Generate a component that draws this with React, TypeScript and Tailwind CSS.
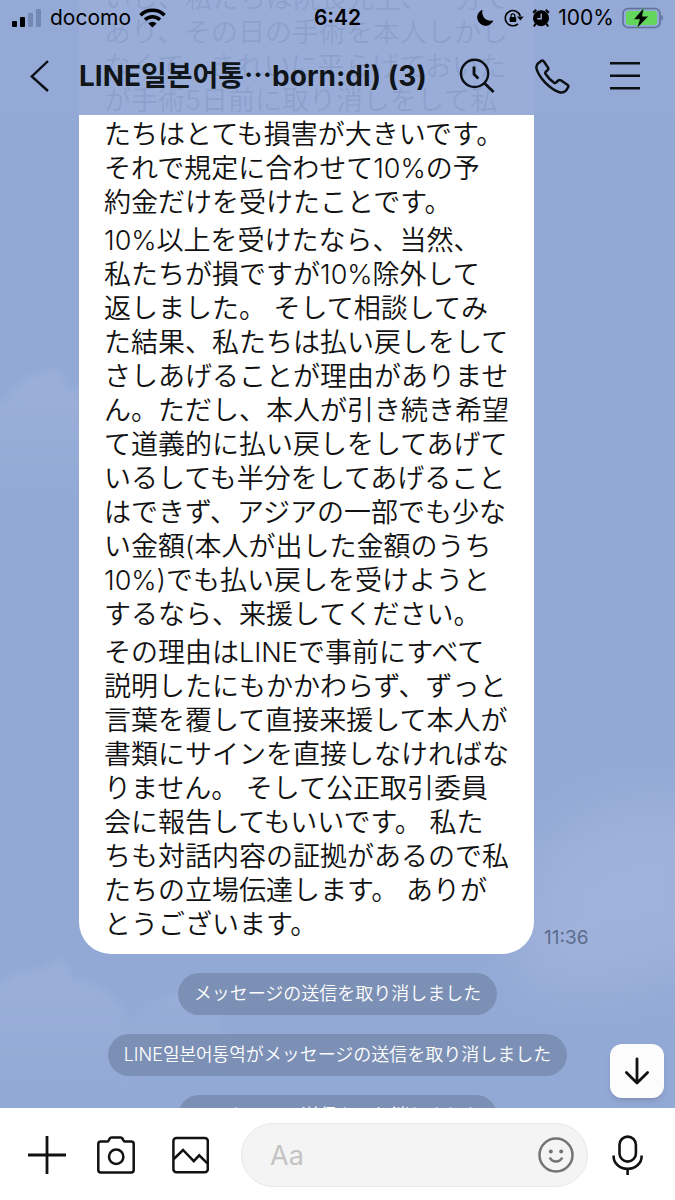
import type { ReactNode } from 'react';

const paragraphs = [
    [
        'いし、私たちは院長先生、一分で',
        'あり、その日の手術を本人しかし',
        'なくて、きれいに平らげておいた',
        'が手術5日前に取り消しをして私',
        'たちはとても損害が大きいです。',
        'それで規定に合わせて10%の予',
        '約金だけを受けたことです。',
    ],
    [
        '10%以上を受けたなら、当然、',
        '私たちが損ですが10%除外して',
        '返しました。 そして相談してみ',
        'た結果、私たちは払い戻しをして',
        'さしあげることが理由がありませ',
        'ん。ただし、本人が引き続き希望',
        'て道義的に払い戻しをしてあげて',
        'いるしても半分をしてあげること',
        'はできず、アジアの一部でも少な',
        'い金額(本人が出した金額のうち',
        '10%)でも払い戻しを受けようと',
        'するなら、来援してください。',
    ],
    [
        'その理由はLINEで事前にすべて',
        '説明したにもかかわらず、ずっと',
        '言葉を覆して直接来援して本人が',
        '書類にサインを直接しなければな',
        'りません。 そして公正取引委員',
        '会に報告してもいいです。 私た',
        'ちも対話内容の証拠があるので私',
        'たちの立場伝達します。 ありが',
        'とうございます。',
    ],
];

const notices = [
    'メッセージの送信を取り消しました',
    'LINE일본어통역がメッセージの送信を取り消しました',
    'メッセージの送信を取り消しました',
];

function IconButton({ label, children }: { label: string; children: ReactNode }) {
    return (
        <button type="button" aria-label={label} className="shrink-0">
            {children}
        </button>
    );
}

function Clouds() {
    return (
        <svg
            className="absolute inset-0 w-full h-full"
            viewBox="0 0 675 1108"
            preserveAspectRatio="none"
            aria-hidden="true"
        >
            <defs>
                <linearGradient id="fade" x1="0" y1="0" x2="0" y2="1">
                    <stop offset="0" stopColor="#a0b3dc" stopOpacity="0.65" />
                    <stop offset="1" stopColor="#a0b3dc" stopOpacity="0" />
                </linearGradient>
                <filter id="soft">
                    <feGaussianBlur stdDeviation="4" />
                </filter>
                <filter id="softer" x="-40%" y="-40%" width="180%" height="180%">
                    <feGaussianBlur stdDeviation="26" />
                </filter>
            </defs>
            <g filter="url(#soft)" fill="url(#fade)">
                <path d="M-20 408 L4 402 Q12 386 24 382 Q38 372 56 370 Q64 376 62 386 L100 398 V500 H-20 Z" />
                <path d="M-20 990 L4 982 Q20 970 46 970 Q54 958 64 962 Q70 970 68 978 L96 984 Q114 996 128 1016 L134 1090 H-20 Z" />
                <path d="M134 1020 Q148 1004 166 996 L220 980 V1090 H120 Z" fillOpacity="0.6" />
            </g>
            <g filter="url(#softer)" fill="#a6b8df" fillOpacity="0.6">
                <path d="M530 870 Q550 835 590 820 Q620 800 650 805 L720 810 V950 Q620 1000 520 980 Z" />
            </g>
        </svg>
    );
}

function StatusBar() {
    return (
        <div className="grid grid-cols-[1fr_auto_1fr] items-center h-9 px-3 text-[21px] leading-6 text-black">
            <div className="flex items-center gap-2">
                <svg width="30" height="20" viewBox="0 0 30 20" aria-hidden="true">
                    <rect x="0" y="13" width="5" height="6" rx="1" />
                    <rect x="8" y="9" width="5" height="10" rx="1" />
                    <rect x="16" y="5" width="5" height="14" rx="1" fill="#7488b5" />
                    <rect x="24" y="1" width="5" height="18" rx="1" fill="#7488b5" />
                </svg>
                <span>docomo</span>
                <svg width="27" height="20" viewBox="0 0 27 20" fill="none" stroke="black" aria-hidden="true">
                    <path d="M1.5 7.2a17 17 0 0 1 24 0" strokeWidth="3.6" />
                    <path d="M6 11.8a10.6 10.6 0 0 1 15 0" strokeWidth="3.4" />
                    <path d="M9.4 15.4a5.8 5.8 0 0 1 8.2 0L13.5 19.4Z" fill="black" stroke="none" />
                </svg>
            </div>
            <span className="font-semibold">6:42</span>
            <div className="flex items-center justify-end">
                <svg className="mr-2.5" width="18" height="18" viewBox="0 0 18 18" aria-hidden="true">
                    <path d="M6 1.2A8 8 0 1 0 16.8 12 9 9 0 0 1 6 1.2Z" stroke="black" strokeWidth="1" strokeLinejoin="round" />
                    <path d="M6 1.2Q3.6 8 8 11.4 11.6 14 16.8 12L10 16 3 12Z" />
                </svg>
                <svg className="mr-2" width="20" height="18" viewBox="0 0 20 18" fill="none" stroke="black" strokeWidth="1.6" aria-hidden="true">
                    <path d="M14 14.8A7.6 7.6 0 1 1 16.2 7" />
                    <path d="M13 7.4h6.6L16.4 11.6Z" fill="black" stroke="none" />
                    <rect x="5.6" y="8" width="6.6" height="5" rx="0.8" fill="black" stroke="none" />
                    <path d="M7 8.4V6.8a1.9 1.9 0 0 1 3.8 0v1.6" strokeWidth="1.2" />
                </svg>
                <svg className="mr-2" width="18" height="18" viewBox="0 0 17 18" aria-hidden="true">
                    <circle cx="8.5" cy="9.2" r="8" />
                    <path d="M0.6 3.8 3.8 0.8M16.4 3.8 13.2 0.8M3 14.8 1.4 17.4M14 14.8l1.6 2.6" stroke="black" strokeWidth="2" />
                    <path d="M8.7 4.4v5.4H4.8" fill="none" stroke="#97acd8" strokeWidth="1.4" />
                </svg>
                <span className="mr-1.5">100%</span>
                <svg width="43" height="22" viewBox="0 0 43 22" aria-hidden="true">
                    <rect x="3" y="1.5" width="37" height="19" rx="5" fill="none" stroke="#5f7099" strokeWidth="1.6" />
                    <rect x="6" y="4" width="31" height="14" rx="3" fill="#65d65c" />
                    <path d="M41.4 8v6q1.6-1 1.6-3t-1.6-3Z" fill="#5f7099" />
                    <path d="M24 0.6 13.6 12.4h6L16.8 21.6 28.6 9.2H22.4Z" stroke="#65d65c" strokeWidth="0.6" />
                </svg>
            </div>
        </div>
    );
}

function Header() {
    return (
        <header className="absolute inset-x-0 top-0 z-10 h-[115px] bg-[#93a9d6]/95">
            <StatusBar />
            <div className="flex items-center h-20 pl-[30px] pr-[35px]">
                <IconButton label="戻る">
                    <svg width="19" height="32" viewBox="0 0 19 32" fill="none" stroke="#0b0f14" strokeWidth="2.4">
                        <path d="M18 1 1.8 16.4 18 31" />
                    </svg>
                </IconButton>
                <h1 className="flex-1 min-w-0 ml-[30px] text-[28px] leading-9 font-bold text-[#0f1519] whitespace-nowrap overflow-hidden">
                    LINE일본어통⋯born:di) (3)
                </h1>
                <div className="flex items-center gap-10">
                    <IconButton label="検索">
                        <svg width="36" height="36" viewBox="0 0 36 36" fill="none" stroke="#0b0f14" strokeWidth="2.4">
                            <circle cx="15.6" cy="15.4" r="13.6" />
                            <path d="M25.2 25l9.4 9" strokeWidth="2.8" />
                            <path d="M15 8.6v7.6l4.4 4.4" strokeWidth="2.8" />
                        </svg>
                    </IconButton>
                    <IconButton label="通話">
                        <svg width="35" height="35" viewBox="0 0 35 35" fill="none" stroke="#0b0f14" strokeWidth="2.5" strokeLinejoin="round">
                            <path d="M3.2 4.2 6.2 1.9Q7.8 0.9 8.9 2.5L13 8.6Q13.8 10 12.6 11.1L10.6 13Q9.9 13.8 10.6 15 13.8 20 18.9 23.6 20.1 24.4 21 23.6L23.2 21.5Q24.4 20.5 25.8 21.3L32.4 25.7Q34 26.8 33 28.4L31 31.6Q28.8 34.4 24.4 33.2 18 31.4 10.2 23.6 3.2 16.2 1.6 9.8 0.8 6.2 3.2 4.2Z" />
                        </svg>
                    </IconButton>
                    <IconButton label="メニュー">
                        <svg width="30" height="30" viewBox="0 0 30 30" stroke="#0b0f14" strokeWidth="2.6">
                            <path d="M0 2.3h30M0 14.8h30M0 27.3h30" />
                        </svg>
                    </IconButton>
                </div>
            </div>
        </header>
    );
}

function Footer() {
    return (
        <footer className="shrink-0 flex items-center h-[92px] pl-7 pr-8 pt-0.5 bg-white">
            <div className="flex items-center mr-8">
                <IconButton label="追加">
                    <svg width="38" height="38" viewBox="0 0 38 38" stroke="#111" strokeWidth="2.8">
                        <path d="M0 19h38M19 0v38" />
                    </svg>
                </IconButton>
                <div className="flex items-center gap-9 ml-[31px]">
                    <IconButton label="カメラ">
                        <svg width="38" height="38" viewBox="0 0 38 38" fill="none" stroke="#111" strokeWidth="2.5" strokeLinejoin="round">
                            <path d="M3.6 5.6H10Q11 5.6 11.6 4.6L12.7 2.5Q13.3 1.5 14.5 1.5h9.2Q24.8 1.5 25.4 2.5L26.6 4.6Q27.2 5.6 28.2 5.6h6.2Q36.7 5.6 36.7 7.9V34Q36.7 36.4 34.3 36.4H3.7Q1.3 36.4 1.3 34V7.9Q1.3 5.6 3.6 5.6Z" />
                            <circle cx="19.2" cy="20.8" r="7.2" />
                        </svg>
                    </IconButton>
                    <IconButton label="写真">
                        <svg width="38" height="38" viewBox="0 0 38 38" fill="none" stroke="#111" strokeWidth="2.5">
                            <rect x="2.4" y="1.9" width="34.4" height="34.4" rx="3" />
                            <path d="M2.8 23 12 14 22.8 25.2 28.2 19.4 36.4 27.4" />
                        </svg>
                    </IconButton>
                </div>
            </div>
            <div className="relative flex-1 min-w-0">
                <input
                    type="text"
                    aria-label="メッセージ"
                    placeholder="Aa"
                    className="block w-full h-16 pl-7 pr-16 rounded-full border border-[#e8e8e8] bg-[#f4f4f4] text-[27px] placeholder:text-[#c3c3c3]"
                />
                <button type="button" aria-label="スタンプ" className="absolute inset-y-0 right-3.5 flex items-center">
                    <svg width="36" height="36" viewBox="0 0 36 36" fill="none" stroke="#747474" strokeWidth="2.5">
                        <circle cx="18" cy="18" r="16.5" />
                        <circle cx="12.8" cy="14.6" r="2" fill="#747474" stroke="none" />
                        <circle cx="23.2" cy="14.6" r="2" fill="#747474" stroke="none" />
                        <path d="M11.8 20.4q1.8 4 6.2 4t6.2-4" />
                    </svg>
                </button>
            </div>
            <div className="ml-6 flex">
                <IconButton label="音声">
                    <svg width="31" height="40" viewBox="0 0 31 40" fill="none" stroke="#111" strokeWidth="2.6">
                        <rect x="7.5" y="1.6" width="16.4" height="25" rx="8.2" />
                        <path d="M1.6 20.4v1a14 12.4 0 0 0 28 0v-1M15.6 33.6V40" />
                    </svg>
                </IconButton>
            </div>
        </footer>
    );
}

export default function App() {
    return (
        <div lang="ja" className="flex flex-col h-screen font-['Inter','Noto_Sans_CJK_JP',sans-serif]">
            <Header />
            <main className="relative flex-1 min-h-0 overflow-hidden bg-[#93a9d5]">
                <Clouds />
                <div className="relative -mt-[18px] flex items-end gap-2.5 pl-[79px]">
                    <div className="flex flex-col gap-1 px-[25px] pb-3 bg-white rounded-b-[32px] text-[27px] leading-[34px] font-[350] text-[#111]">
                        {paragraphs.map((lines, idx) => (
                            <p key={idx}>
                                {lines.map((line) => (
                                    <span key={line} className="block whitespace-nowrap">
                                        {line}
                                    </span>
                                ))}
                            </p>
                        ))}
                    </div>
                    <time className="mb-1 text-[19px] leading-6 text-[#5c6c8c]">11:36</time>
                </div>
                <div className="relative flex flex-col items-center gap-[19px] mt-[19px]">
                    {notices.map((text, idx) => (
                        <p
                            key={idx}
                            className="h-[42px] px-4 rounded-full bg-[#7c90b5] text-[18px] leading-[42px] font-[350] text-white whitespace-nowrap"
                        >
                            {text}
                        </p>
                    ))}
                </div>
                <button
                    type="button"
                    aria-label="一番下へ"
                    className="absolute right-[11px] bottom-2.5 flex items-center justify-center w-[54px] h-[54px] rounded-xl bg-[#fcfcfc] shadow-md"
                >
                    <svg width="26" height="28" viewBox="0 0 26 28" fill="none" stroke="#111" strokeWidth="2.8" strokeLinecap="round" strokeLinejoin="round">
                        <path d="M13 2v24M2.4 15.6 13 26l10.6-10.4" />
                    </svg>
                </button>
            </main>
            <Footer />
        </div>
    );
}
